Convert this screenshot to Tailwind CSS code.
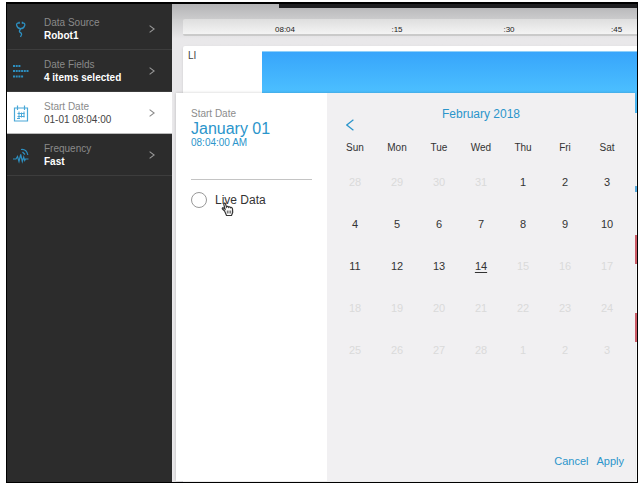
<!DOCTYPE html>
<html lang="en">
<head>
<meta charset="utf-8">
<meta name="viewport" content="width=device-width, initial-scale=1">
<title>Robot data</title>
<script src="https://cdn.jsdelivr.net/npm/@tailwindcss/browser@4"></script>
</head>
<body class="h-screen bg-white pt-[2px] pr-[6px] pb-[4px] pl-[6px] font-['Liberation_Sans',Arial,sans-serif] text-[#333]">
<div class="flex h-full overflow-hidden border border-t-2 border-black bg-[#e9e8ea]">

  <nav class="flex w-[165px] shrink-0 flex-col bg-[#2c2c2c] pt-1 text-[10px] leading-[13px]">
    <a href="#source" class="flex h-[42px] items-center border-b border-[#3d3d3d] pr-[17px] pl-[5px]">
      <svg class="h-5 w-5" viewBox="0 0 20 20" fill="none" stroke="#2d8fc0" stroke-width="1.300"><path d="M7 3.800C5 3.800 4.200 5 4.700 6.500 5.200 8.300 6.800 9.700 8.700 9.700S12.200 8.300 12.700 6.500C13.200 5 12.400 3.800 10.600 3.800M8.700 9.700C8.500 11 7.200 11 7.400 12.300 7.700 13.700 9.700 13.700 9.600 15.300 9.500 16.500 8.800 16.800 8.500 18"/><path d="M7.200 2.800V4.800M10.400 2.800V4.800"/></svg>
      <span class="ml-3 flex-1"><span class="block text-[#8a8a8a]">Data Source</span><span class="block font-bold text-white">Robot1</span></span>
      <svg class="h-2 w-[6px]" viewBox="0 0 6 8" fill="none" stroke="#999" stroke-width="1.100"><path d="M.6.6 5.200 4 .6 7.400"/></svg>
    </a>
    <a href="#fields" class="flex h-[42px] items-center border-b border-[#3d3d3d] pr-[17px] pl-[5px]">
      <svg class="h-5 w-5" viewBox="0 0 20 20" fill="none" stroke="#2d8fc0" stroke-width="2" stroke-dasharray="2 .7"><path d="M1 5H8.500M1 10H16.500M1 15.500H11.500"/></svg>
      <span class="ml-3 flex-1"><span class="block text-[#8a8a8a]">Date Fields</span><span class="block font-bold text-white">4 items selected</span></span>
      <svg class="h-2 w-[6px]" viewBox="0 0 6 8" fill="none" stroke="#999" stroke-width="1.100"><path d="M.6.6 5.200 4 .6 7.400"/></svg>
    </a>
    <a href="#start" aria-current="true" class="flex h-[42px] items-center border-b border-[#bbb] bg-white pr-[17px] pl-[5px]">
      <svg class="h-5 w-5" viewBox="0 0 20 20" fill="none" stroke="#4aa8d8" stroke-width="1.200"><path d="M2.500 5H15.500V18H2.500ZM5.500 2.500V7M12.500 2.500V7"/><path stroke-width="1" d="M5.500 10.500H12.500M5.500 13.500H12.500M7 8.500V15.500M9.500 9.500V14.500M12 8.500V14.500M5 15.500H8"/></svg>
      <span class="ml-3 flex-1"><span class="block text-[#8a8a8a]">Start Date</span><span class="block text-[#444]">01-01 08:04:00</span></span>
      <svg class="h-2 w-[6px]" viewBox="0 0 6 8" fill="none" stroke="#888" stroke-width="1.100"><path d="M.6.6 5.200 4 .6 7.400"/></svg>
    </a>
    <a href="#frequency" class="flex h-[42px] items-center border-b border-[#3d3d3d] pr-[17px] pl-[5px]">
      <svg class="h-5 w-5" viewBox="0 0 20 20" fill="none" stroke="#2d8fc0" stroke-width="1.200"><path d="M1 14H4L5.500 11.500 7 16.500 8.700 9.500 10.300 16.500 11.700 12 12.700 15.500 13.500 14H16.500M9 4.500C12.500 4 15 6 15.800 10M10.500 7L13 9.500"/></svg>
      <span class="ml-3 flex-1"><span class="block text-[#8a8a8a]">Frequency</span><span class="block font-bold text-white">Fast</span></span>
      <svg class="h-2 w-[6px]" viewBox="0 0 6 8" fill="none" stroke="#999" stroke-width="1.100"><path d="M.6.6 5.200 4 .6 7.400"/></svg>
    </a>
  </nav>

  <main class="relative flex min-w-0 flex-1 flex-col bg-[#e9e8ea]">
    <div class="h-[15px] shrink-0 bg-linear-to-b from-[#b4b4b6] to-[#cbcbcc]">
      <div class="ml-[107px] h-1 bg-[#202022]"></div>
    </div>
    <div class="flex flex-1 flex-col bg-linear-to-b from-[#cdcdce] to-[#e9e8ea] to-[20px] pl-[11px]">
      <div class="grid h-[17px] shrink-0 grid-cols-[46px_repeat(3,112px)_1fr] items-end overflow-hidden rounded-l-xs border-b-2 border-[#cacaca] bg-linear-to-b from-[#dedede] to-[#f4f4f4] text-center text-[8px] leading-[8px] text-[#222]">
        <span></span><span>08:04</span><span>:15</span><span>:30</span><span class="pl-[46px] text-left">:45</span>
      </div>
      <section class="mt-[10px] flex flex-1 rounded-tl-xs bg-white shadow-sm">
        <h2 class="w-[79px] shrink-0 pt-1 pl-[5px] text-[10px] leading-[12px] text-[#444]">LI</h2>
        <div class="flex flex-1 flex-col pt-[5px]">
          <div class="h-[62px] shrink-0 border-t border-[#90d0fa] bg-linear-to-b from-[#38a5fb] to-[#4cc0ff] to-[42px]"></div>
          <div class="mt-[73px] h-[6px] shrink-0 bg-[#5ab4ea]"></div>
          <div class="mt-[43px] h-[29px] shrink-0 bg-[#d8606c]"></div>
          <div class="mt-[49px] h-[29px] shrink-0 bg-[#d8606c]"></div>
        </div>
      </section>
    </div>

    <section aria-label="Start date" class="absolute top-[89px] right-[2px] bottom-px left-1 flex bg-[#f1f0f2] shadow-[0_0_3px_rgba(0,0,0,0.2)]">
      <div class="w-[151px] shrink-0 bg-white px-[15px] pt-[15px]">
        <p class="text-[10px] leading-[12px] text-[#8c8c8c]">Start Date</p>
        <p class="text-[16px] leading-[17px] text-[#2b95cb]">January 01</p>
        <p class="text-[10px] leading-[12px] text-[#2b95cb]">08:04:00 AM</p>
        <hr class="mt-[30px] border-[#c4c4c4]">
        <div class="relative mt-3">
          <label class="flex items-center gap-2 text-[12px] leading-4 whitespace-nowrap"><input type="radio" name="live" class="h-4 w-4 shrink-0 appearance-none rounded-full border border-[#999] bg-white">Live Data</label>
          <svg aria-hidden="true" class="absolute top-[10px] left-[30px] h-[15px] w-[13px]" viewBox="0 0 13 15"><path d="M3.600 9 1.500 7C.8 6.200 1.700 5.400 2.500 5.900L4 7 2.800 2.300C2.600 1 4.100.7 4.500 1.900L5.500 5C6 4.200 7.200 4.300 7.500 5.200 8.100 4.500 9.200 4.700 9.500 5.600 10.500 5.100 11.400 5.800 11.500 7L11.700 10.500 10.500 13.500H5.500Z" fill="#fff" stroke="#333" stroke-width="1.200"/><path d="M6.300 8.500V11.500M8 8.500V11.500M9.700 8.500V11.500" stroke="#333" stroke-width=".8"/></svg>
        </div>
      </div>

      <div class="flex flex-1 flex-col pt-[15px] pr-[7px] pl-[7px]">
        <div class="flex h-[26px] items-start">
          <button aria-label="Previous month" class="mt-[11px] ml-3"><svg class="h-3 w-2" viewBox="0 0 8 12" fill="none" stroke="#2b95cb" stroke-width="1.200"><path d="M7.400.8.8 6 7.400 11.200"/></svg></button>
          <h1 class="flex-1 pr-5 text-center text-[12px] leading-[13px] text-[#2b95cb]">February 2018</h1>
        </div>
        <table class="w-full table-fixed border-collapse text-center text-[11px] leading-[13px]">
          <thead class="text-[10px]"><tr class="h-[27px]"><th class="font-normal">Sun</th><th class="font-normal">Mon</th><th class="font-normal">Tue</th><th class="font-normal">Wed</th><th class="font-normal">Thu</th><th class="font-normal">Fri</th><th class="font-normal">Sat</th></tr></thead>
          <tbody>
            <tr class="h-[42px]"><td><button disabled class="text-[#dadada]">28</button></td><td><button disabled class="text-[#dadada]">29</button></td><td><button disabled class="text-[#dadada]">30</button></td><td><button disabled class="text-[#dadada]">31</button></td><td><button>1</button></td><td><button>2</button></td><td><button>3</button></td></tr>
            <tr class="h-[42px]"><td><button>4</button></td><td><button>5</button></td><td><button>6</button></td><td><button>7</button></td><td><button>8</button></td><td><button>9</button></td><td><button>10</button></td></tr>
            <tr class="h-[42px]"><td><button>11</button></td><td><button>12</button></td><td><button>13</button></td><td><button class="underline underline-offset-2">14</button></td><td><button disabled class="text-[#dadada]">15</button></td><td><button disabled class="text-[#dadada]">16</button></td><td><button disabled class="text-[#dadada]">17</button></td></tr>
            <tr class="h-[42px]"><td><button disabled class="text-[#dadada]">18</button></td><td><button disabled class="text-[#dadada]">19</button></td><td><button disabled class="text-[#dadada]">20</button></td><td><button disabled class="text-[#dadada]">21</button></td><td><button disabled class="text-[#dadada]">22</button></td><td><button disabled class="text-[#dadada]">23</button></td><td><button disabled class="text-[#dadada]">24</button></td></tr>
            <tr class="h-[42px]"><td><button disabled class="text-[#dadada]">25</button></td><td><button disabled class="text-[#dadada]">26</button></td><td><button disabled class="text-[#dadada]">27</button></td><td><button disabled class="text-[#dadada]">28</button></td><td><button disabled class="text-[#dadada]">1</button></td><td><button disabled class="text-[#dadada]">2</button></td><td><button disabled class="text-[#dadada]">3</button></td></tr>
          </tbody>
        </table>
        <div class="mt-auto flex justify-end gap-2 pr-1 pb-3 text-[11px] leading-4 text-[#2b95cb]">
          <button>Cancel</button><button>Apply</button>
        </div>
      </div>
    </section>
  </main>
</div>
</body>
</html>
